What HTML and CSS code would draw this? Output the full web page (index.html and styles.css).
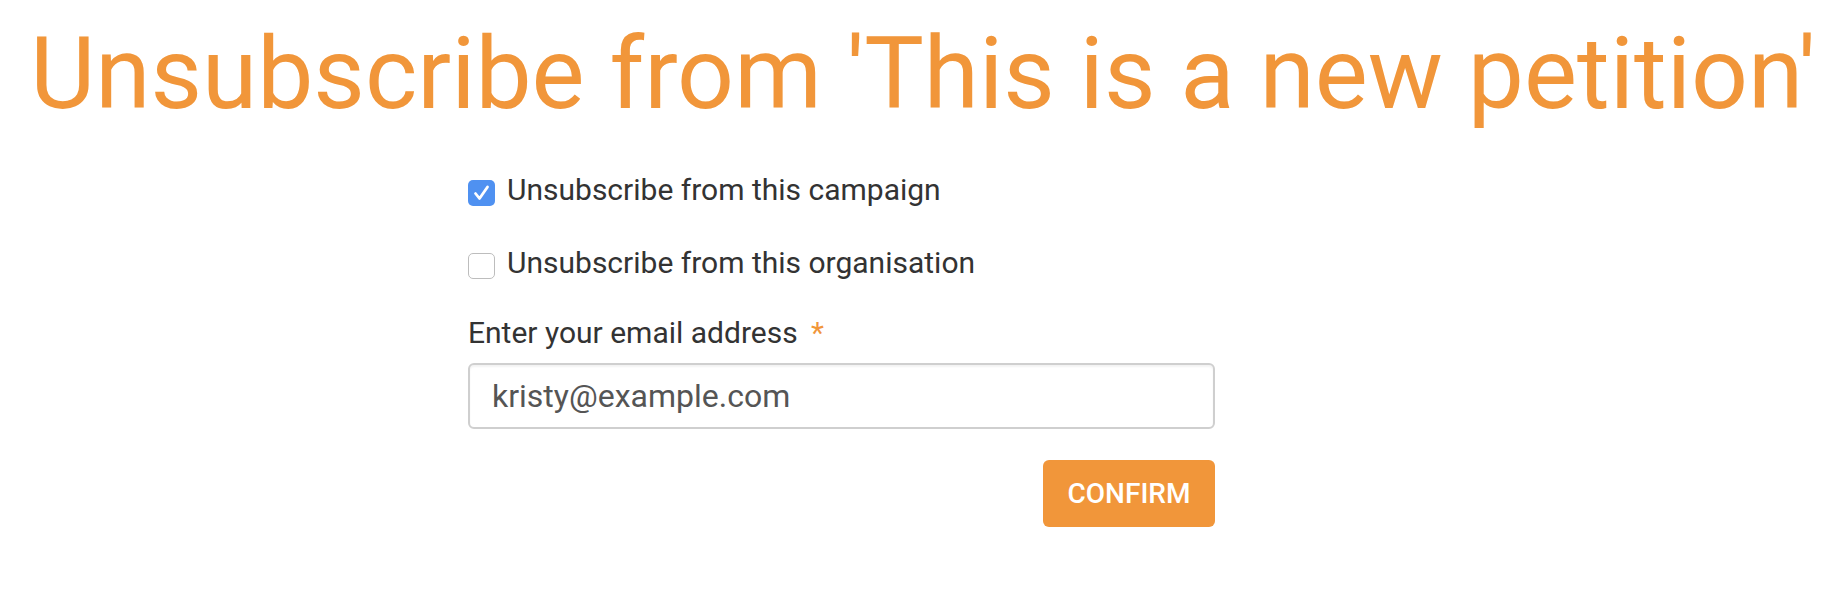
FILE: index.html
```html
<!DOCTYPE html>
<html>
<head>
<meta charset="utf-8">
<link rel="stylesheet" href="styles.css">
</head>
<body>
<h1 class="title">Unsubscribe from 'This is a new petition'</h1>
<form class="form">
  <label class="check-row">
    <span class="box box-checked">
      <svg viewBox="0 0 27 26" width="27" height="26"><path d="M7.5 13.5 L11.5 18.5 L19.5 7" fill="none" stroke="#fff" stroke-width="2.8" stroke-linecap="round" stroke-linejoin="round"/></svg>
    </span>
    <span class="check-text">Unsubscribe from this campaign</span>
  </label>
  <label class="check-row row-second">
    <span class="box"></span>
    <span class="check-text">Unsubscribe from this organisation</span>
  </label>
  <div class="field-label">Enter your email address <span class="req">*</span></div>
  <div class="input">kristy@example.com</div>
  <div class="actions">
    <button type="button" class="btn">CONFIRM</button>
  </div>
</form>
</body>
</html>
```
FILE: styles.css
```css
html, body {
  margin: 0;
  padding: 0;
  background: #fff;
}
body {
  font-family: Roboto, "Liberation Sans", sans-serif;
  color: #333;
}
.title {
  margin: 15px 0 0;
  padding-left: 10px;
  font-size: 100px;
  font-weight: 400;
  line-height: 117px;
  color: #f1963a;
  text-align: center;
  white-space: nowrap;
}
.form {
  margin: 40px 0 0 468px;
  width: 747px;
  display: flex;
  flex-direction: column;
}
.check-row {
  display: flex;
  align-items: flex-start;
  gap: 12px;
  font-size: 30px;
  line-height: 36px;
  color: #333;
}
.row-second {
  margin-top: 37px;
}
.box {
  margin-top: 8px;
  width: 27px;
  height: 26px;
  box-sizing: border-box;
  border: 1.5px solid #bdbdbd;
  border-radius: 5px;
  background: #fff;
  flex: none;
  display: flex;
}
.box-checked {
  border: none;
  background: #4f91f1;
}
.field-label {
  margin-top: 34px;
  font-size: 30px;
  line-height: 36px;
  color: #333;
}
.req {
  color: #f1963a;
  margin-left: 6px;
}
.input {
  margin-top: 12px;
  height: 66px;
  box-sizing: border-box;
  border: 2px solid #cfcfcf;
  border-radius: 6px;
  box-shadow: inset 0 2px 2px rgba(0,0,0,0.05);
  padding: 0 22px;
  display: flex;
  align-items: center;
  font-size: 32px;
  color: #555;
}
.actions {
  margin-top: 31px;
  display: flex;
  justify-content: flex-end;
}
.btn {
  width: 172px;
  height: 67px;
  border: none;
  border-radius: 6px;
  background: #f1963a;
  color: #fff;
  font-family: Roboto, "Liberation Sans", sans-serif;
  font-weight: 500;
  font-size: 28px;
  padding: 0;
}
```
